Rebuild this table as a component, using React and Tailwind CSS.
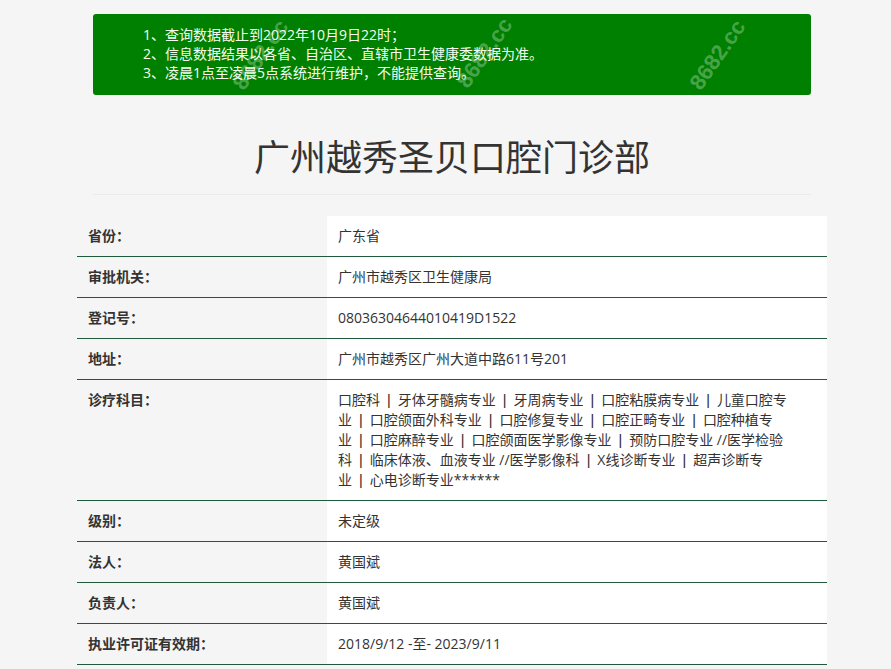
import React from 'react';

const font = { fontFamily: '"Open Sans", "Noto Sans CJK SC", sans-serif' };

const rows = [
  { label: '省份：', value: ['广东省'] },
  { label: '审批机关：', value: ['广州市越秀区卫生健康局'] },
  { label: '登记号：', value: ['08036304644010419D1522'] },
  { label: '地址：', value: ['广州市越秀区广州大道中路611号201'] },
  {
    label: '诊疗科目：',
    value: [
      ['口腔科', '牙体牙髓病专业', '牙周病专业', '口腔粘膜病专业', '儿童口腔专'],
      ['业', '口腔颌面外科专业', '口腔修复专业', '口腔正畸专业', '口腔种植专'],
      ['业', '口腔麻醉专业', '口腔颌面医学影像专业', '预防口腔专业 //医学检验'],
      ['科', '临床体液、血液专业 //医学影像科', 'X线诊断专业', '超声诊断专'],
      ['业', '心电诊断专业******'],
    ],
  },
  { label: '级别：', value: ['未定级'] },
  { label: '法人：', value: ['黄国斌'] },
  { label: '负责人：', value: ['黄国斌'] },
  { label: '执业许可证有效期：', value: ['2018/9/12 -至- 2023/9/11'] },
];

function Line({ parts }) {
  if (typeof parts === 'string') return <div>{parts}</div>;
  return (
    <div className="whitespace-nowrap">
      {parts.map((p, i) => (
        <React.Fragment key={i}>
          {i > 0 && <span className="mx-[5px] font-semibold">|</span>}
          {p}
        </React.Fragment>
      ))}
    </div>
  );
}

// faint site watermark over the notice box
function Mark({ className }) {
  return (
    <div
      aria-hidden="true"
      className={`pointer-events-none absolute text-[22px] leading-[24px] font-bold text-white/30 -rotate-[55deg] select-none ${className}`}
      style={{ fontFamily: '"Liberation Sans", sans-serif' }}
    >
      8682.cc
    </div>
  );
}

export default function App() {
  return (
    <div className="min-h-[669px] bg-[#f5f5f5] text-[#333]" style={font}>
      <div className="ml-[77px] w-[750px] pt-[14px]">
        <div className="relative mx-[16px] overflow-hidden rounded-[3px] bg-[#008000] pl-[50px] pt-[11px] pb-[13px] text-[14px] leading-[19px] text-[#f4fff0]">
          <div className="relative z-10">1、查询数据截止到2022年10月9日22时；</div>
          <div className="relative z-10">2、信息数据结果以各省、自治区、直辖市卫生健康委数据为准。</div>
          <div className="relative z-10">3、凌晨1点至凌晨5点系统进行维护，不能提供查询。</div>
          <Mark className="left-[128px] top-[29px]" />
          <Mark className="left-[352px] top-[27px]" />
          <Mark className="left-[585px] top-[29px]" />
        </div>

        <h1 className="mt-[38px] text-center text-[36px] leading-[50px] font-normal text-[#333]">
          广州越秀圣贝口腔门诊部
        </h1>
        <div className="mx-[16px] mt-[11px] h-px bg-[#ebebeb]" />

        <div className="mt-[21px]">
          {rows.map((r) => (
            <div key={r.label} className="flex border-b border-[#1f5a3d] text-[14px] leading-[20px]">
              <div className="w-[250px] shrink-0 py-[10px] pl-[11px] font-bold">{r.label}</div>
              <div className="flex-1 bg-white py-[10px] pl-[11px] pr-[20px]">
                {r.value.map((v, i) => (
                  <Line key={i} parts={v} />
                ))}
              </div>
            </div>
          ))}
        </div>
      </div>
    </div>
  );
}
